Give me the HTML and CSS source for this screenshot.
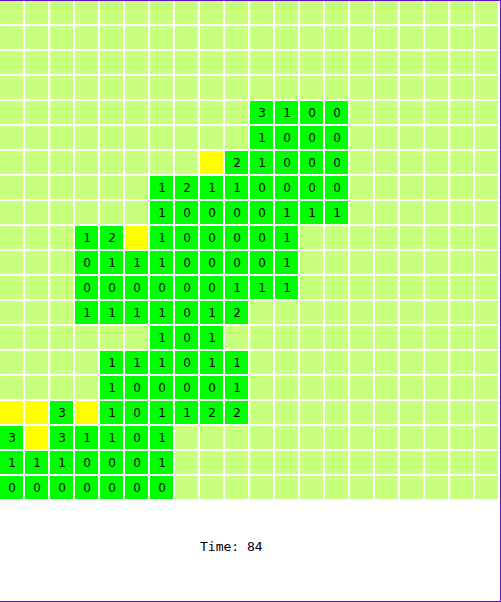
FILE: index.html
```
<!DOCTYPE html>
<html lang="en">
<head>
<meta charset="utf-8">
<title>Minesweeper</title>
<link rel="stylesheet" href="styles.css">
</head>
<body>
<main class="game">
  <div class="board" id="board"></div>
  <p class="status">Time: 84</p>
</main>
<script src="board.js"></script>
</body>
</html>
```
FILE: styles.css
```
* {
  box-sizing: border-box;
}

body {
  margin: 0;
  background: #fff;
  color: #000;
}

.game {
  display: flex;
  flex-direction: column;
  min-height: 100vh;
  border: solid #6414c8;
  border-width: 1px 1px 1px 0;
}

.board {
  display: grid;
  grid-template-columns: repeat(20, minmax(0, 1fr));
  gap: 2px;
  padding-right: 2px;
}

.cell {
  display: flex;
  align-items: center;
  justify-content: center;
  aspect-ratio: 1;
  min-width: 0;
  margin: 0;
  padding: 0 0 0 1px;
  border: 0;
  border-radius: 0;
  background: #c8ff7c;
  color: #000;
  font: 12px/14px "DejaVu Sans", sans-serif;
}

.open {
  background: #0f0;
}

.flag {
  background: #ff0;
}

.status {
  margin: 0;
  padding: 40px 0 40px 40%;
  font: 13px/16px "DejaVu Sans Mono", monospace;
}
```
FILE: board.js
```
// "." is a hidden cell, "F" a flagged one, a digit an open one.
const rows = [
  "....................",
  "....................",
  "....................",
  "....................",
  "..........3100......",
  "..........1000......",
  "........F21000......",
  "......12110000......",
  "......10000111......",
  "...12F100001........",
  "...011100001........",
  "...000000111........",
  "...1111012..........",
  "......101...........",
  "....111011..........",
  "....100001..........",
  "FF3F101122..........",
  "3F31101.............",
  "1110001.............",
  "0000000............."
];

const board = document.getElementById("board");

for (const row of rows) {
  for (const value of row) {
    const cell = document.createElement("button");
    cell.type = "button";
    cell.className = "cell";
    if (value === "F") {
      cell.classList.add("flag");
      cell.setAttribute("aria-label", "Flagged");
    } else if (value === ".") {
      cell.setAttribute("aria-label", "Hidden");
    } else {
      cell.classList.add("open");
      cell.textContent = value;
    }
    board.append(cell);
  }
}
```
